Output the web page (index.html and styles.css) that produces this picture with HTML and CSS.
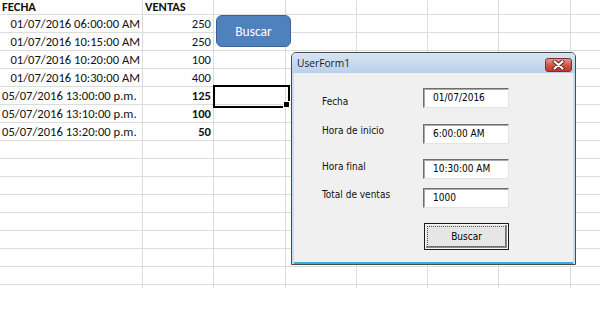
FILE: index.html
```html
<!DOCTYPE html>
<html lang="es">
<head>
  <meta charset="UTF-8" />
  <meta name="viewport" content="width=device-width, initial-scale=1.0"/>
  <title>Ventas por hora</title>
  <link rel="stylesheet" href="styles.css">
</head>
<body>
  <div class="sheet">
    <div class="col col-a">
      <div class="cell head">FECHA</div>
      <div class="cell num">01/07/2016 06:00:00 AM</div>
      <div class="cell num">01/07/2016 10:15:00 AM</div>
      <div class="cell num">01/07/2016 10:20:00 AM</div>
      <div class="cell num">01/07/2016 10:30:00 AM</div>
      <div class="cell">05/07/2016 13:00:00 p.m.</div>
      <div class="cell">05/07/2016 13:10:00 p.m.</div>
      <div class="cell">05/07/2016 13:20:00 p.m.</div>
    </div>
    <div class="col col-b">
      <div class="cell head">VENTAS</div>
      <div class="cell num">250</div>
      <div class="cell num">250</div>
      <div class="cell num">100</div>
      <div class="cell num">400</div>
      <div class="cell num bold">125</div>
      <div class="cell num bold">100</div>
      <div class="cell num bold">50</div>
    </div>
    <div class="col col-c">
      <div class="cell head"></div>
      <div class="cell"></div>
      <div class="cell"></div>
      <div class="cell"></div>
      <div class="cell"></div>
      <div class="cell selected"></div>
    </div>
    <div class="col"></div>
    <div class="col"></div>
    <div class="col"></div>
    <div class="col col-g"></div>
    <div class="col col-last"></div>
  </div>

  <button class="shape-btn">Buscar</button>

  <div class="userform">
    <div class="titlebar">
      <span class="caption">UserForm1</span>
      <span class="close">
        <svg width="13" height="10" viewBox="0 0 13 10">
          <path d="M2.5 1.5 L10.5 8.5 M10.5 1.5 L2.5 8.5" stroke="#5a2420" stroke-width="4" stroke-linecap="round"/>
          <path d="M2.5 1.5 L10.5 8.5 M10.5 1.5 L2.5 8.5" stroke="#fff" stroke-width="2.2" stroke-linecap="round"/>
        </svg>
      </span>
    </div>
    <div class="form-body">
      <div class="field field-1">
        <label>Fecha</label>
        <div class="textbox">01/07/2016</div>
      </div>
      <div class="field field-2">
        <label>Hora de inicio</label>
        <div class="textbox">6:00:00 AM</div>
      </div>
      <div class="field field-3">
        <label>Hora final</label>
        <div class="textbox">10:30:00 AM</div>
      </div>
      <div class="field field-4">
        <label>Total de ventas</label>
        <div class="textbox">1000</div>
      </div>
      <button class="win-btn"><span>Buscar</span></button>
    </div>
  </div>
</body>
</html>
```

FILE: styles.css
```css
* {
  margin: 0;
  padding: 0;
  box-sizing: border-box;
}

body {
  width: 600px;
  height: 331px;
  background: #fff;
  overflow: hidden;
  font-family: Carlito, Lato, 'Liberation Sans', sans-serif;
  color: #000;
}

/* hoja de calculo */
.sheet {
  display: flex;
  height: 288px;
  background-color: #fff;
  background-image: repeating-linear-gradient(to bottom, transparent 0 17px, #dcdcdc 17px 18px);
  background-position: 0 -3px;
}

.col {
  width: 71px;
  flex-shrink: 0;
  border-right: 1px solid #dcdcdc;
}

.col-a { width: 143px; }
.col-c { width: 72px; }
.col-g { width: 72px; }
.col-last { flex: 1; border-right: none; }

.cell {
  height: 18px;
  line-height: 18px;
  padding: 1px 2px 0;
  font-size: 12.6px;
  white-space: nowrap;
  color: #111;
}

.cell.head {
  height: 14px;
  line-height: 13px;
  padding-top: 0;
  font-weight: bold;
}

.num { text-align: right; }
.bold { font-weight: bold; }

.selected {
  position: relative;
  margin-left: -1px;
}

.selected::after {
  content: '';
  position: absolute;
  left: 0;
  top: -1px;
  width: 73px;
  height: 19px;
  border: 2px solid #000;
}

.selected::before {
  content: '';
  position: absolute;
  left: 70px;
  top: 15px;
  width: 5px;
  height: 5px;
  background: #000;
  border: 1px solid #fff;
  z-index: 1;
}

/* forma Buscar sobre la hoja */
.shape-btn {
  position: absolute;
  left: 216px;
  top: 15px;
  width: 75px;
  height: 32px;
  background: #4f81bd;
  border: 1.5px solid #3a6496;
  border-radius: 6px;
  color: #fff;
  font-family: Carlito, Lato, 'Liberation Sans', sans-serif;
  font-size: 13.5px;
}

/* ventana UserForm */
.userform {
  position: absolute;
  left: 291px;
  top: 52px;
  width: 285px;
  height: 213px;
  border: 1px solid #4a4a4a;
  border-radius: 5px 5px 0 0;
  background: #c9dcf0;
  display: flex;
  flex-direction: column;
  font-family: 'DejaVu Sans Condensed', Tahoma, 'Liberation Sans', sans-serif;
  font-size: 10px;
}

.titlebar {
  height: 20px;
  display: flex;
  align-items: center;
  justify-content: space-between;
  padding: 0 3px 0 5px;
  background: linear-gradient(to bottom, #d7e5f4, #b9d1ea);
  border-radius: 4px 4px 0 0;
}

.caption {
  font-family: 'Open Sans', 'Liberation Sans', sans-serif;
  font-size: 10.2px;
  color: #1a1a1a;
  margin-top: -1px;
}

.close {
  width: 27px;
  height: 14px;
  margin-top: 4px;
  border: 1px solid #7c3029;
  border-radius: 3px;
  background: linear-gradient(to bottom, #e59a8f, #cf5a4d 50%, #c2382c);
  display: flex;
  align-items: center;
  justify-content: center;
}

.form-body {
  flex: 1;
  background: #f0f0f0;
  margin: 0 2px 0 2px;
  border-bottom: 2px solid #35aedb;
  padding: 15px 0 0 28px;
  display: flex;
  flex-direction: column;
  color: #111;
}

.field {
  display: flex;
  align-items: flex-start;
}

.field label {
  width: 101px;
}

.field-1 label { padding-top: 8px; }
.field-2 { margin-top: 16px; }
.field-2 label { padding-top: 1px; }
.field-3 { margin-top: 15px; }
.field-3 label { padding-top: 2px; }
.field-4 { margin-top: 9px; }
.field-4 label { padding-top: 1px; }

.textbox {
  width: 86px;
  height: 20px;
  line-height: 17px;
  padding-left: 9px;
  background: #fff;
  border: 1px solid;
  border-color: #6d6d6d #e4e4e4 #e4e4e4 #6d6d6d;
  box-shadow: inset 1px 1px 0 #a9a9a9;
  font-size: 10px;
  color: #000;
}

.win-btn {
  margin: 15px 0 0 102px;
  width: 85px;
  height: 27px;
  padding: 2px;
  background: #e6e6e6;
  border: 1px solid #1a1a1a;
  box-shadow: inset 0 0 0 1px #f7f7f7, inset -1px -1px 0 2px #8a8a8a;
  font-family: 'DejaVu Sans Condensed', Tahoma, 'Liberation Sans', sans-serif;
  font-size: 10px;
  color: #000;
}

.win-btn span {
  display: flex;
  align-items: center;
  justify-content: center;
  height: 100%;
  border: 1px dotted #555;
}
```
